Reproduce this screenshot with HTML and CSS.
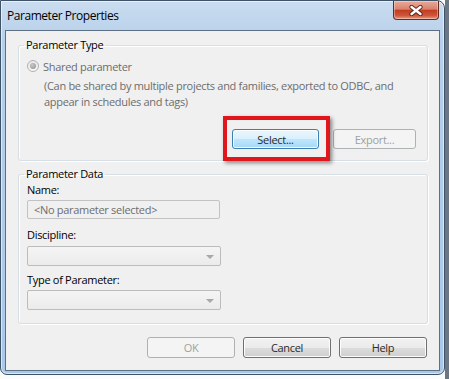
FILE: index.html
```html
<!DOCTYPE html>
<html lang="en">
<head>
    <meta charset="UTF-8">
    <meta name="viewport" content="width=device-width, initial-scale=1.0">
    <title>Parameter Properties</title>
    <link rel="stylesheet" href="styles.css">
</head>
<body>
    <div class="window">
        <div class="titlebar">
            <span class="title">Parameter Properties</span>
            <button class="close-btn" type="button" aria-label="Close">
                <svg width="14" height="11" viewBox="0 0 14 11">
                    <path d="M2.5 2 L11.5 9 M11.5 2 L2.5 9" stroke="#5a2418" stroke-width="4.2" stroke-linecap="round"/>
                    <path d="M2.5 2 L11.5 9 M11.5 2 L2.5 9" stroke="#ffffff" stroke-width="2.4" stroke-linecap="round"/>
                </svg>
            </button>
        </div>

        <div class="client">
            <fieldset class="group group-type">
                <legend>Parameter Type</legend>
                <label class="radio-row">
                    <span class="radio"><span class="radio-dot"></span></span>
                    Shared parameter
                </label>
                <p class="hint">(Can be shared by multiple projects and families, exported to ODBC, and<br>appear in schedules and tags)</p>
                <div class="group-buttons">
                    <span class="callout">
                        <button class="btn btn-focus" type="button">Select...</button>
                    </span>
                    <button class="btn btn-export" type="button" disabled>Export...</button>
                </div>
            </fieldset>

            <fieldset class="group group-data">
                <legend>Parameter Data</legend>
                <div class="field-label">Name:</div>
                <div class="textbox">&lt;No parameter selected&gt;</div>

                <div class="field-label label-discipline">Discipline:</div>
                <div class="combo"><span class="arrow"></span></div>

                <div class="field-label label-type">Type of Parameter:</div>
                <div class="combo"><span class="arrow"></span></div>
            </fieldset>

            <div class="dialog-buttons">
                <button class="btn" type="button" disabled>OK</button>
                <button class="btn" type="button">Cancel</button>
                <button class="btn" type="button">Help</button>
            </div>
        </div>
    </div>
</body>
</html>
```

FILE: styles.css
```css
* {
    box-sizing: border-box;
}
body {
    margin: 0;
    height: 379px;
    overflow: hidden;
    background: linear-gradient(to right, #fbfcfd 445px, #6b7784 445px);
    font-family: "Open Sans", "Noto Sans", sans-serif;
    font-size: 11px;
    letter-spacing: -0.3px;
    color: #1e1e1e;
}
.window {
    width: 445px;
    height: 375px;
    border: 1px solid #3f5368;
    border-radius: 0 8px 7px 7px;
    background: linear-gradient(to bottom, #cadcef 0, #b7d0ea 40px, #a9c8e8 100%);
    padding: 0 4px 3px 4px;
    display: flex;
    flex-direction: column;
    box-shadow: inset 0 0 0 1px rgba(255, 255, 255, 0.55);
}
.titlebar {
    height: 29px;
    display: flex;
    justify-content: space-between;
    align-items: flex-start;
}
.title {
    padding-left: 2px;
    line-height: 29px;
    font-size: 12px;
    letter-spacing: -0.45px;
    color: #000;
}
.close-btn {
    width: 46px;
    height: 19px;
    margin-right: 1px;
    padding: 0;
    border: 1px solid #6b2a1e;
    border-top: none;
    border-radius: 0 0 4px 4px;
    background: linear-gradient(to bottom, #eaa999 0%, #d9836f 45%, #c23d22 52%, #cf5539 80%, #e7987d 100%);
    box-shadow: inset 0 0 0 1px rgba(255, 255, 255, 0.35);
    display: flex;
    align-items: center;
    justify-content: center;
}
.client {
    flex: 1;
    background: #f0f0f0;
    border: 1px solid #5d6f82;
    padding: 6px 11px 0 12px;
    display: flex;
    flex-direction: column;
}
.group {
    margin: 0;
    border: 1px solid #d5dfe5;
    border-radius: 3px;
    box-shadow: inset 1px 1px 0 #fff, 1px 1px 0 #fff;
    padding: 0 11px 11px 8px;
}
.group legend {
    margin-left: -3px;
    padding: 0 2px;
    line-height: 16px;
    color: #000;
}
.radio-row {
    display: flex;
    align-items: center;
    gap: 4px;
    height: 16px;
    margin-top: 5px;
    color: #6d6d6d;
}
.radio {
    width: 12px;
    height: 12px;
    border-radius: 50%;
    border: 1px solid #b1b1b1;
    background: linear-gradient(to bottom, #e6e6e6, #f8f8f8);
    display: flex;
    align-items: center;
    justify-content: center;
}
.radio-dot {
    width: 6px;
    height: 6px;
    border-radius: 50%;
    background: radial-gradient(circle at 40% 35%, #c9c9c9, #8d8d8d);
}
.hint {
    margin: 4px 0 0 17px;
    line-height: 16px;
    color: #6d6d6d;
}
.group-buttons {
    display: flex;
    justify-content: flex-end;
    gap: 14px;
    margin-top: 19px;
}
.callout {
    position: relative;
    display: flex;
}
.callout::after {
    content: "";
    position: absolute;
    top: -13px;
    left: -9px;
    right: -11px;
    bottom: -12px;
    border: 4px solid #e1151c;
    box-shadow: 2px 2px 4px rgba(0, 0, 0, 0.45);
    pointer-events: none;
}
.btn {
    height: 20px;
    width: 88px;
    padding: 0;
    border: 1px solid #707070;
    border-radius: 3px;
    background: linear-gradient(to bottom, #f2f2f2 0%, #ebebeb 50%, #dddddd 51%, #cfcfcf 100%);
    box-shadow: inset 0 0 0 1px #fcfcfc;
    font-family: inherit;
    font-size: 11px;
    font-weight: 400;
    letter-spacing: -0.3px;
    color: #2a2a2a;
}
.btn:disabled {
    border-color: #adb2b5;
    background: #f4f4f4;
    box-shadow: none;
    color: #a0a0a0;
}
.btn-focus {
    width: 87px;
    border-color: #3c7fb1;
    background: linear-gradient(to bottom, #eaf6fd 0%, #d9f0fc 50%, #bee6fd 51%, #a7d9f5 100%);
}
.btn-export {
    width: 83px;
}
.group-data {
    margin-top: 5px;
    padding-bottom: 13px;
}
.field-label {
    line-height: 16px;
    color: #000;
}
.label-discipline {
    margin-top: 8px;
}
.label-type {
    margin-top: 6px;
}
.textbox {
    width: 193px;
    height: 19px;
    margin-top: 2px;
    padding-left: 6px;
    border: 1px solid #c2c2c2;
    border-radius: 2px;
    background: #f0f0f0;
    color: #6d6d6d;
    line-height: 17px;
}
.combo {
    position: relative;
    width: 194px;
    height: 20px;
    margin-top: 3px;
    border: 1px solid #bcbcbc;
    border-radius: 2px;
    background: linear-gradient(to bottom, #f4f4f4, #ebebeb);
}
.label-type + .combo {
    margin-top: 2px;
}
.arrow {
    position: absolute;
    right: 6px;
    top: 8px;
    border-left: 4px solid transparent;
    border-right: 4px solid transparent;
    border-top: 4px solid #a8a8a8;
}
.dialog-buttons {
    display: flex;
    justify-content: flex-end;
    gap: 8px;
    margin-top: 13px;
    padding-right: 1px;
}
.dialog-buttons .btn {
    height: 21px;
}
```
